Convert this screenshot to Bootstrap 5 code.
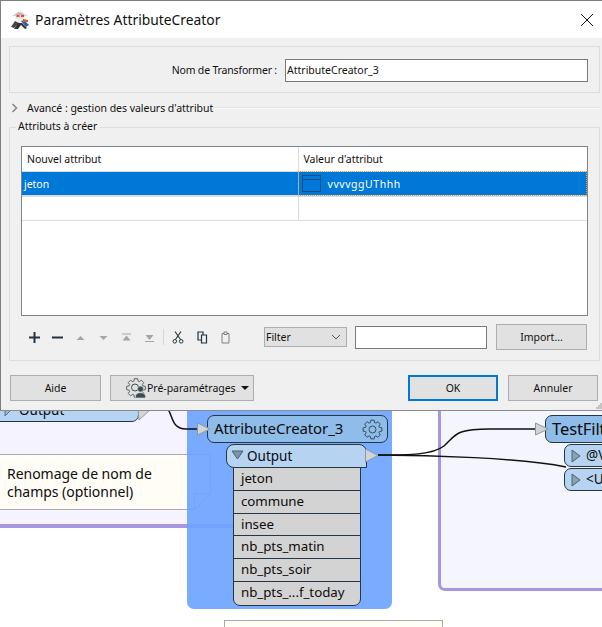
<!DOCTYPE html>
<html lang="fr">
<head>
<meta charset="utf-8">
<title>Paramètres AttributeCreator</title>
<link href="https://cdn.jsdelivr.net/npm/bootstrap@5.3.0/dist/css/bootstrap.min.css" rel="stylesheet">
<style>
html,body{margin:0;width:602px;height:627px;overflow:hidden;background:#fff}
body{font-family:"Noto Sans","Open Sans",sans-serif;font-size:10.5px;letter-spacing:-.03px;color:#111;line-height:1.2}
.dlg{height:411px;background:#f0f0f0;border-top:1px solid #7f7f7f;border-left:1px solid #7f7f7f;border-bottom:1px solid #8a8a8a;position:relative;z-index:2;padding:0}
.ttl{height:37px;background:#fff;padding-left:9px;padding-right:8px}
.ttl-text{font-size:13.85px;letter-spacing:0;margin-left:4px;margin-top:1px}
.body-wrap{padding:8px 2px 0 8px}
.p-name{height:47px;border:1px solid #dcdcdc;padding-right:11px;padding-top:1px}
.lbl{margin-right:8px;letter-spacing:-.17px}
.fld{border:1px solid #7a7a7a;background:#fff;height:23px;border-radius:0;padding:0 1px;font-size:10.5px;color:#111;box-shadow:none}
.fld-name{width:303px}
.adv{height:34px;padding-left:2px;padding-bottom:4px}
.adv-text{margin-left:8px;white-space:nowrap}
.adv-line{flex:1;height:2px;background:#fafafa;border-top:1px solid #e3e3e3;margin-left:1px}
.grp{height:234px;border:1px solid #dcdcdc;margin-top:0;position:relative;padding:18px 11px 0 11px}
.grp-leg{position:absolute;left:6px;top:-8px;background:#f0f0f0;padding:0 3px 0 2px}
.tbl-box{height:170px;border:1px solid #7d868a;background:#fff}
.tbl-box .table{margin:0;table-layout:fixed;--bs-table-bg:transparent;font-size:10.5px;color:#111}
.tbl-box .table td,.tbl-box .table th{padding:0;font-weight:400;vertical-align:middle;border-bottom:1px solid #dcdcdc;border-right:1px solid #dcdcdc}
.tbl-box .table th{height:24px;padding-left:5px;padding-top:1px}
.tbl-box .table th:last-child,.tbl-box .table td:last-child{border-right:0}
.tbl-box .table .cell-sel{background:#0078d7;color:#fff;height:25px;padding-left:2px;padding-top:3px;border-bottom:2px solid #dcdcdc;border-right-color:#8ab4dc}
.tbl-box .table .cell-focus{background:#0078d7;color:#fff;outline:1px dotted #e8a050;outline-offset:-1px;padding-left:3px;border-bottom:2px solid #dcdcdc}
.tbl-box .table .cell-empty{height:24px}
.val-text{letter-spacing:.55px;margin-top:3px}
.swatch{width:19px;height:17px;border:1px solid #0a4c86;position:relative;margin-right:7px;display:block;background:#0078d7}
.swatch::after{content:"";position:absolute;left:0;right:0;top:3px;border-top:1px solid #0a4c86}
.tools{height:35px;padding-top:7px;padding-left:2px}
.tool-ic{width:23px;display:flex;justify-content:center;flex:none}
.tool-ic-w{width:24px}
.tool-sep{width:1px;height:16px;background:#d5d5d5;margin:0 2px 0 2px;flex:none}
.sel{width:83px;height:20px;background:#e1e1e1;border:1px solid #adadad;padding:0 1px;margin-left:27px;flex:none}
.fld-filter{width:132px;margin-left:8px;height:23px;flex:none}
.wbtn{background:#e1e1e1;border:1px solid #adadad;border-radius:0;font-size:10.5px;letter-spacing:-.03px;color:#111;padding:0;height:26px;line-height:1}
.wbtn-imp{width:91px;margin-left:9px;flex:none}
.foot{padding:14px 2px 0 1px}
.wbtn-std{width:90px}
.wbtn-aide{width:91px}
.wbtn-pre{width:144px;margin-left:9px;padding-left:15px}
.wbtn-ok{border:2px solid #0078d7;margin-left:auto}
.wbtn-can{margin-left:10px}
.caret-d{width:0;height:0;border-left:4px solid transparent;border-right:4px solid transparent;border-top:4px solid #111;margin-left:5px;display:block}
.grip{position:absolute;right:0;bottom:1px}
.canvas{position:relative;height:216px;overflow:hidden;background:#fff;font-family:"Noto Sans","Open Sans",sans-serif;color:#0c0c0c}
.cv{position:absolute}
.bm-left{left:0;top:-5px;width:240px;height:122px;background:#f5f3ff;border-bottom:4px solid #a896e2}
.bm-blue{left:187px;top:-8px;width:205px;height:206px;background:rgba(106,163,255,.9);border-radius:7px}
.bm-right{left:438px;top:-8px;width:190px;height:188px;background:#f5f5fd;border:3px solid #a896e2;border-radius:7px}
.nd{border:1px solid #253746;font-size:15px;letter-spacing:-.1px;white-space:nowrap;overflow:hidden}
.nd-head{background:#8fbce9;border-radius:7px}
.nd-port{background:#b6d3f1;font-size:13.5px;letter-spacing:0}
.nd-out-top{left:-8px;top:-11px;width:147px;height:22px;border-radius:0 0 7px 7px;padding-left:26px;font-size:13.5px;line-height:18px}
.nd-creator{left:207px;top:4px;width:181px;height:28px;line-height:25px;padding-left:6px}
.nd-output{left:226px;top:33px;width:141px;height:24px;border-radius:8px 0 0 8px;padding-left:20px;line-height:22px;border-top-right-radius:8px}
.attrs{left:233px;top:56px;width:128px;border:1px solid #253746;border-radius:0 0 7px 7px;background:#d3d3d3;overflow:hidden;font-size:13.3px}
.attrs div{height:22.8px;line-height:21px;padding-left:7px;border-bottom:1px solid #253746;white-space:nowrap}
.attrs div:last-child{border-bottom:0}
.nd-test{left:545px;top:4px;width:80px;height:28px;line-height:25px;padding-left:6px;font-size:16.5px}
.nd-p1{left:564px;top:33px;width:60px;height:23px;border-radius:7px 0 0 7px;padding-left:21px;line-height:21px}
.nd-p2{left:564px;top:57px;width:60px;height:23px;border-radius:7px 0 0 7px;padding-left:21px;line-height:21px}
.note-txt{left:7px;top:54px;font-size:14px;line-height:18px;width:190px}
.note-b{left:224px;top:209px;width:219px;height:20px;background:#fffef5;border:1px solid #a9a9a9}
.wires{left:0;top:0;width:602px;height:216px;pointer-events:none}
</style>
</head>
<body>
<div class="dlg">
  <div class="ttl d-flex align-items-center">
    <svg width="21" height="20" viewBox="0 0 21 20"><circle cx="10" cy="6" r="4.5" fill="#e8e4dc"/><path d="M2 6 L9 2 L18 6 L10 5Z" fill="#bbb"/><rect x="6.5" y="5" width="3" height="2" fill="#e44"/><rect x="11" y="5" width="3" height="2" fill="#e44"/><path d="M7 9 L14 9 L13 14 L8 14Z" fill="#f0f0f0"/><path d="M5 11 L1 17 L4 18 L9 13Z" fill="#444"/><path d="M11 11 L16 17 L19 15 L14 10Z" fill="#2b5fa8"/><path d="M8 13 L4 19 L8 19 L11 15 L15 19 L17 18 L12 13Z" fill="#333"/><path d="M13 9 L18 10 L18 12 L13 12Z" fill="#d85a30"/></svg>
    <span class="ttl-text">Paramètres AttributeCreator</span>
    <svg class="ms-auto" width="14" height="14" viewBox="0 0 14 14"><path d="M1 1 L13 13 M13 1 L1 13" stroke="#111" stroke-width="1" fill="none"/></svg>
  </div>
  <div class="body-wrap">
    <div class="p-name d-flex align-items-center justify-content-end">
      <span class="lbl">Nom de Transformer :</span>
      <input class="form-control fld fld-name" value="AttributeCreator_3" aria-label="Nom de Transformer">
    </div>
    <div class="adv d-flex align-items-center">
      <svg width="8" height="10" viewBox="0 0 8 10"><path d="M1.5 1 L5.5 5 L1.5 9" stroke="#8a8a8a" stroke-width="1.6" fill="none"/></svg>
      <span class="adv-text">Avancé : gestion des valeurs d'attribut</span>
      <span class="adv-line"></span>
    </div>
    <div class="grp">
      <span class="grp-leg">Attributs à créer</span>
      <div class="tbl-box">
        <table class="table">
          <colgroup><col style="width:276px"><col></colgroup>
          <thead><tr><th>Nouvel attribut</th><th>Valeur d'attribut</th></tr></thead>
          <tbody>
            <tr><td class="cell-sel">jeton</td><td class="cell-focus"><span class="d-flex align-items-center"><span class="swatch"></span><span class="val-text">vvvvggUThhh</span></span></td></tr>
            <tr><td class="cell-empty"></td><td class="cell-empty"></td></tr>
          </tbody>
        </table>
      </div>
      <div class="tools d-flex align-items-center">
        <span class="tool-ic"><svg width="11" height="11" viewBox="0 0 11 11"><path d="M0 5.5H11M5.5 0V11" stroke="#22343f" stroke-width="2"/></svg></span>
        <span class="tool-ic"><svg width="11" height="11" viewBox="0 0 11 11"><path d="M0 5.5H11" stroke="#22343f" stroke-width="2"/></svg></span>
        <span class="tool-ic"><svg width="11" height="11" viewBox="0 0 11 11"><path d="M1.5 8 L5.5 4 L9.5 8Z" fill="#a5a5a5"/></svg></span>
        <span class="tool-ic"><svg width="11" height="11" viewBox="0 0 11 11"><path d="M1.5 4 L5.5 8 L9.5 4Z" fill="#a5a5a5"/></svg></span>
        <span class="tool-ic"><svg width="11" height="11" viewBox="0 0 11 11"><path d="M1 2H10" stroke="#a5a5a5"/><path d="M1.5 8.5 L5.5 3.5 L9.5 8.5Z" fill="#a5a5a5"/></svg></span>
        <span class="tool-ic"><svg width="11" height="11" viewBox="0 0 11 11"><path d="M1 9.5H10" stroke="#a5a5a5"/><path d="M1.5 3 L5.5 8 L9.5 3Z" fill="#a5a5a5"/></svg></span>
        <span class="tool-sep"></span>
        <span class="tool-ic tool-ic-w"><svg width="12" height="13" viewBox="0 0 12 13"><path d="M3 0.5 L8.5 8.5 M9 0.5 L3.5 8.5" stroke="#22343f" stroke-width="1.1" fill="none"/><circle cx="2.8" cy="10.3" r="1.8" stroke="#22343f" fill="none"/><circle cx="9.2" cy="10.3" r="1.8" stroke="#22343f" fill="none"/></svg></span>
        <span class="tool-ic tool-ic-w"><svg width="11" height="13" viewBox="0 0 11 13"><path d="M1 1H6V9H1Z" fill="#f0f0f0" stroke="#22343f" stroke-width="1.2"/><path d="M4.5 4H9.5V12H4.5Z" fill="#f0f0f0" stroke="#22343f" stroke-width="1.2"/></svg></span>
        <span class="tool-ic"><svg width="9" height="13" viewBox="0 0 9 13"><path d="M1 2.5H8V12H1Z" fill="#f0f0f0" stroke="#808080" stroke-width="1"/><path d="M3 1H6V3.5H3Z" fill="#f0f0f0" stroke="#808080" stroke-width="1"/></svg></span>
        <div class="sel d-flex align-items-center justify-content-between"><span>Filter</span><svg class="me-1" width="10" height="6" viewBox="0 0 10 6"><path d="M1 1 L5 5 L9 1" stroke="#555" fill="none"/></svg></div>
        <input class="form-control fld fld-filter" aria-label="Filter">
        <button class="wbtn wbtn-imp" type="button">Import...</button>
      </div>
    </div>
    <div class="foot d-flex">
      <button class="wbtn wbtn-aide" type="button">Aide</button>
      <button class="wbtn wbtn-pre d-flex align-items-center" type="button">
        <svg width="21" height="21" viewBox="0 0 21 21"><path transform="translate(10 10)" d="M6.89 -2.1L9.36 -1.65L9.36 1.65L6.89 2.1L6.36 3.38L7.78 5.45L5.45 7.78L3.38 6.36L2.1 6.89L1.65 9.36L-1.65 9.36L-2.1 6.89L-3.38 6.36L-5.45 7.78L-7.78 5.45L-6.36 3.38L-6.89 2.1L-9.36 1.65L-9.36 -1.65L-6.89 -2.1L-6.36 -3.38L-7.78 -5.45L-5.45 -7.78L-3.38 -6.36L-2.1 -6.89L-1.65 -9.36L1.65 -9.36L2.1 -6.89L3.38 -6.36L5.45 -7.78L7.78 -5.45L6.36 -3.38Z" fill="none" stroke="#4a565c" stroke-width=".9"/><circle cx="9" cy="9.500" r="3.500" fill="none" stroke="#3c4a52"/><circle cx="14.500" cy="11" r="3" fill="#3c4a52" stroke="#e1e1e1" stroke-width=".6"/><path d="M9.500 20v-2c0-2 2.200-3.300 5-3.300s5 1.300 5 3.300v2Z" fill="#3c4a52" stroke="#e1e1e1" stroke-width=".6"/></svg>
        <span>Pré-paramétrages</span><span class="caret-d"></span>
      </button>
      <button class="wbtn wbtn-std wbtn-ok" type="button">OK</button>
      <button class="wbtn wbtn-std wbtn-can" type="button">Annuler</button>
    </div>
  </div>
  <svg class="grip" width="6" height="6" viewBox="0 0 6 6"><path d="M4 0h2v2H4ZM2 2h2v2H2ZM4 2h2v2H4ZM0 4h2v2H0ZM2 4h2v2H2ZM4 4h2v2H4Z" fill="#c4c4c4"/></svg>
</div>
<div class="canvas">
  <div class="cv bm-left"></div>
  <div class="cv bm-right"></div>
  <svg class="cv" style="left:0;top:43px" width="212" height="56" viewBox="0 0 212 56"><path d="M-2 .5H210.500V40L194.500 55.500H-2Z" fill="#fffdf6" stroke="#a9a9a9"/><path d="M194.500 55.500V40H210.500" fill="none" stroke="#a9a9a9"/></svg>
  <div class="cv bm-blue"></div>
  <div class="cv note-txt">Renomage de nom de champs (optionnel)</div>
  <div class="cv note-b"></div>
  <svg class="cv wires" viewBox="0 0 602 216">
    <path d="M168 -2 C173 6 172 18 186 18 H198" fill="none" stroke="#111" stroke-width="1.500"/>
    <path d="M378 44 C410 44 432 44 444 35 C456 24 455 18 490 18 H536" fill="none" stroke="#111" stroke-width="1.500"/>
    <path d="M378 44 C430 44 520 47 566 56" fill="none" stroke="#111" stroke-width="1.500"/>
  </svg>
  <div class="cv nd nd-port nd-out-top">Output</div>
  <div class="cv nd nd-head nd-creator">AttributeCreator_3</div>
  <svg class="cv" style="left:362px;top:8px" width="21" height="21" viewBox="0 0 21 21"><path transform="translate(10.500 10.500)" d="M6.89 -2.1L9.36 -1.65L9.36 1.65L6.89 2.1L6.36 3.38L7.78 5.45L5.45 7.78L3.38 6.36L2.1 6.89L1.65 9.36L-1.65 9.36L-2.1 6.89L-3.38 6.36L-5.45 7.78L-7.78 5.45L-6.36 3.38L-6.89 2.1L-9.36 1.65L-9.36 -1.65L-6.89 -2.1L-6.36 -3.38L-7.78 -5.45L-5.45 -7.78L-3.38 -6.36L-2.1 -6.89L-1.65 -9.36L1.65 -9.36L2.1 -6.89L3.38 -6.36L5.45 -7.78L7.78 -5.45L6.36 -3.38Z" fill="none" stroke="#37505f"/><circle cx="10.500" cy="10.500" r="3.500" fill="none" stroke="#37505f"/></svg>
  <div class="cv nd nd-port nd-output">Output</div>
  <div class="cv attrs">
    <div>jeton</div><div>commune</div><div>insee</div><div>nb_pts_matin</div><div>nb_pts_soir</div><div>nb_pts_...f_today</div>
  </div>
  <div class="cv nd nd-head nd-test">TestFilter</div>
  <div class="cv nd nd-port nd-p1">@Value</div>
  <div class="cv nd nd-port nd-p2">&lt;Unfiltered&gt;</div>
  <svg class="cv" style="left:0;top:0" width="602" height="216" viewBox="0 0 602 216">
    <path d="M5 -6 L13 -3 L5 5Z" fill="#9fb8d0" stroke="#5c7080"/>
    <path d="M138 -2 H151 L139 9Z" fill="#d2d4d6" stroke="#8a9aa5"/>
    <path d="M197.500 12 L210 18 L197.500 24Z" fill="#d2d4d6" stroke="#8a9aa5"/>
    <path d="M232 47 L243 47 L237.500 55Z" transform="translate(0 -7)" fill="#7e93a5" stroke="#4f6270"/>
    <path d="M365.500 38 L378 44.500 L365.500 51Z" fill="#d2d4d6" stroke="#8a9aa5"/>
    <path d="M535.500 12 L548 18 L535.500 24Z" fill="#d2d4d6" stroke="#8a9aa5"/>
    <path d="M572 39 L580 45 L572 51Z" fill="#8aa0b4" stroke="#4f6270"/>
    <path d="M572 63 L580 69 L572 75Z" fill="#8aa0b4" stroke="#4f6270"/>
  </svg>
</div>
<script src="https://cdn.jsdelivr.net/npm/bootstrap@5.3.0/dist/js/bootstrap.bundle.min.js"></script>
</body>
</html>
